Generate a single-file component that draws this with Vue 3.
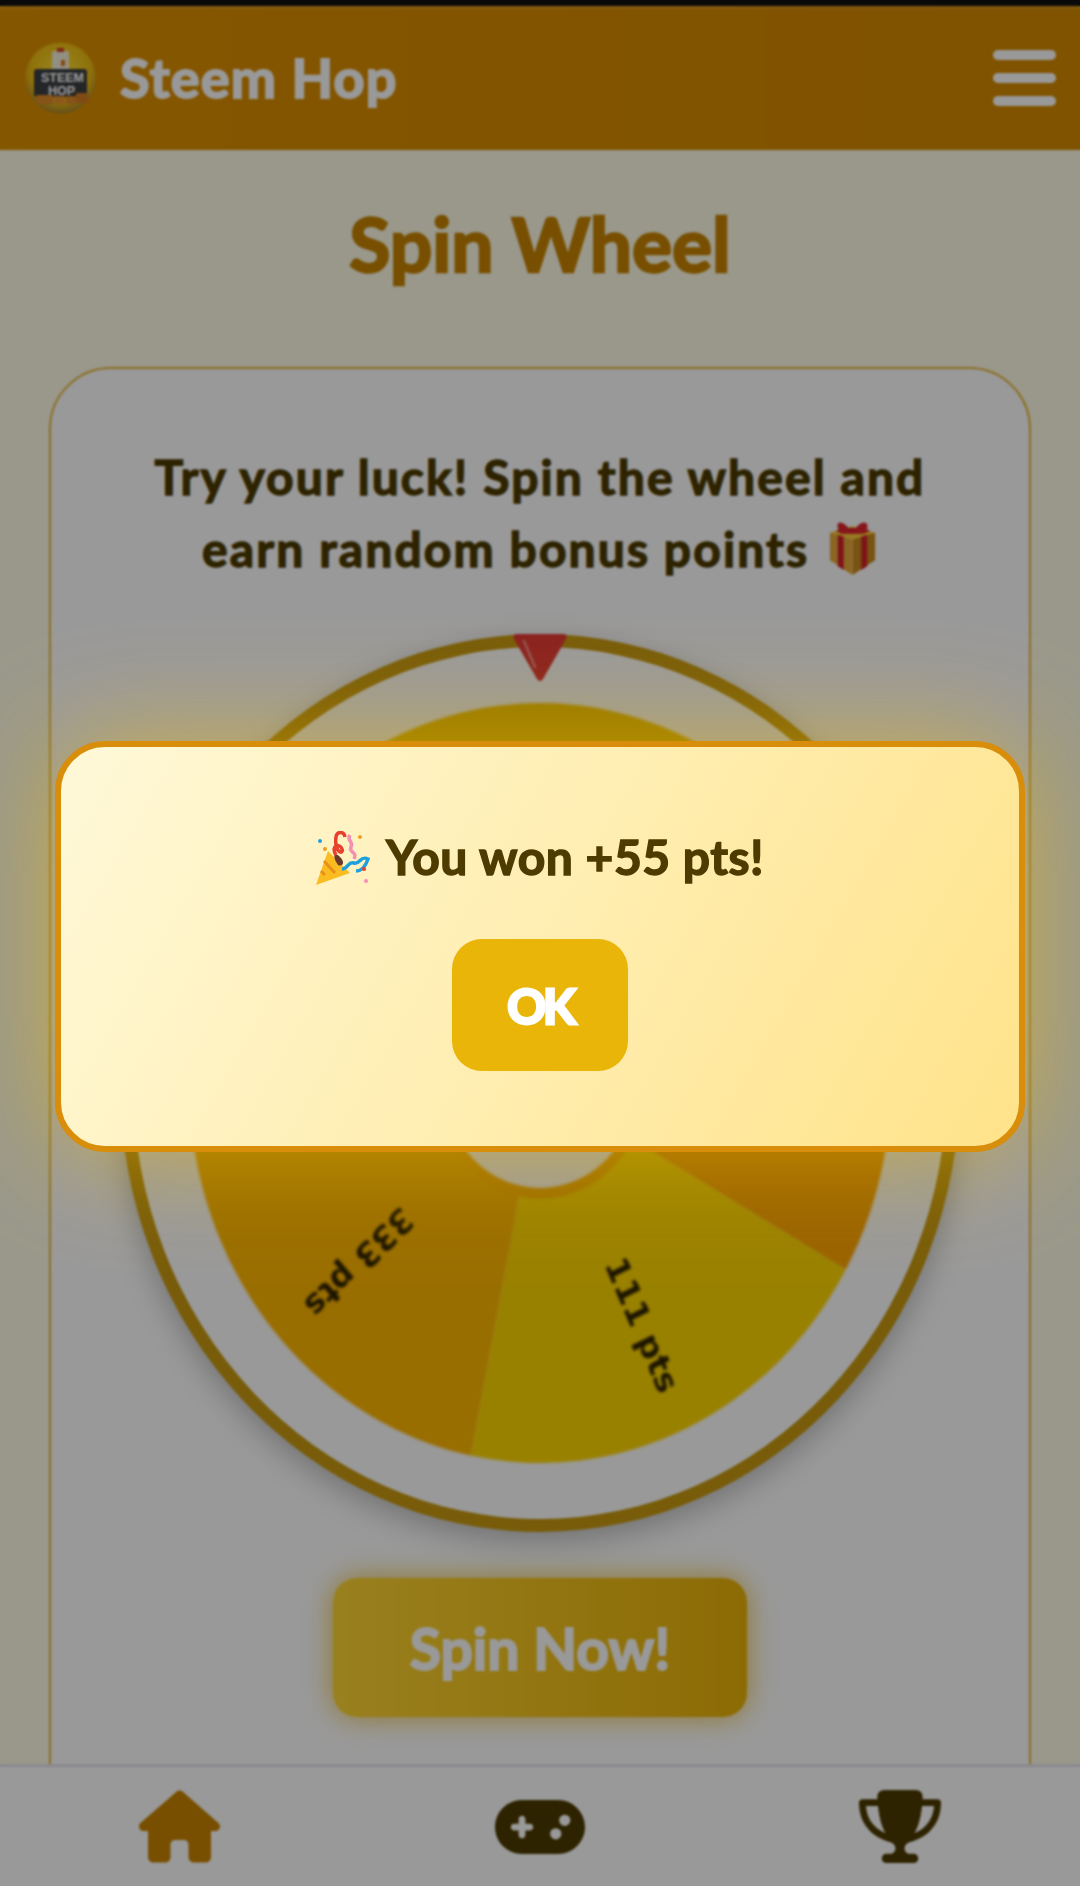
<template>
  <div class="app">
    <div class="status-bar"></div>
    <header class="top-bar">
      <div class="brand">
        <svg class="logo" viewBox="0 0 71 72">
          <defs>
            <radialGradient id="logoBg" cx="50%" cy="40%" r="60%">
              <stop offset="0%" stop-color="#ffe23a" />
              <stop offset="72%" stop-color="#eebb10" />
              <stop offset="100%" stop-color="#a8842e" />
            </radialGradient>
          </defs>
          <circle cx="35.5" cy="36" r="35.5" fill="url(#logoBg)" />
          <rect x="27" y="9" width="17" height="20" rx="2" fill="#f4efdc" />
          <rect x="32" y="6" width="7" height="4" fill="#d8402a" />
          <rect x="36" y="18" width="4" height="6" fill="#e07a20" />
          <rect x="9" y="27" width="53" height="28" rx="3" fill="#3b3f42" />
          <text x="37.5" y="40" class="logo-text" textLength="43" lengthAdjust="spacingAndGlyphs">STEEM</text>
          <text x="36.5" y="53" class="logo-text" textLength="27" lengthAdjust="spacingAndGlyphs">HOP</text>
          <rect x="11" y="53" width="17" height="9" rx="1" fill="#e08a28" />
          <rect x="29" y="54" width="11" height="8" rx="1" fill="#e8962c" />
          <rect x="41" y="54" width="10" height="8" rx="1" fill="#e08a28" />
          <rect x="51" y="51" width="12" height="10" rx="1" fill="#d87c22" />
        </svg>
        <span class="brand-name">Steem Hop</span>
      </div>
      <div class="menu-btn"><i></i><i></i><i></i></div>
    </header>

    <main class="content">
      <h1 class="page-title">Spin Wheel</h1>
      <section class="wheel-card">
        <p class="intro">
          Try your luck! Spin the wheel and<br />earn random bonus points
          <svg class="gift" viewBox="0 0 50 54">
            <path d="M25 16 48 11V39L25 54Z" fill="#c98a1e" />
            <path d="M25 16 2 11V39L25 54Z" fill="#e8a93a" />
            <path d="M2 11 25 4 48 11 25 18Z" fill="#ffc93c" />
            <path d="M10 13V45L16 49V15ZM40 13V45L34 49V15Z" fill="#d3222a" />
            <path d="M8 9 16 6 36 6 43 9 36 12 14 12Z" fill="#d3222a" />
            <path d="M24 10C16 -2 8 -2 10 6 11 11 18 12 24 10ZM26 10C32 -2 42 -2 40 6 39 11 32 12 26 10Z" fill="#e2262e" />
          </svg>
        </p>

        <div class="wheel-wrap">
          <svg class="pointer" viewBox="0 0 54 48">
            <path d="M4 0H50Q55 0 53 5L30 45Q27 49 24 45L1 5Q-1 0 4 0Z" fill="#e53935" />
            <path d="M11 7 22 33" stroke="#f58a84" stroke-width="2.5" stroke-linecap="round" />
          </svg>
          <div class="wheel-ring">
            <svg class="pie" viewBox="-100 -100 200 200" preserveAspectRatio="none">
              <path v-for="s in slices" :key="s.label" :d="s.path" :fill="s.color" />
              <text
                v-for="s in slices"
                :key="'t' + s.label"
                class="slice-label"
                :transform="s.labelTransform"
              >{{ s.label }}</text>
              <circle r="29" fill="#fff" stroke="#ffb300" stroke-width="2.8" />
            </svg>
          </div>
        </div>

        <button class="spin-btn">Spin Now!</button>
      </section>
    </main>

    <nav class="bottom-nav">
      <svg class="nav-icon home" viewBox="0 0 576 512" fill="#c88400">
        <path d="M575.8 255.5c0 18-15 32.1-32 32.1h-32l.7 160.2c0 2.7-.2 5.4-.5 8.1V472c0 22.1-17.9 40-40 40H456c-1.1 0-2.2 0-3.3-.1c-1.4 .1-2.8 .1-4.2 .1H416 392c-22.1 0-40-17.9-40-40V448 384c0-17.7-14.3-32-32-32H256c-17.7 0-32 14.3-32 32v64 24c0 22.1-17.9 40-40 40H160 128.1c-1.5 0-3-.1-4.5-.2c-1.2 .1-2.4 .2-3.6 .2H104c-22.1 0-40-17.9-40-40V360c0-.9 0-1.9 .1-2.8V287.6H32c-18 0-32-14-32-32.1c0-9 3-17 10-24L266.4 8c7-7 15-8 22-8s15 2 21 7L564.8 231.5c8 7 12 15 11 24z" />
      </svg>
      <svg class="nav-icon pad" viewBox="0 64 640 384" fill="#4d3b00">
        <path d="M192 64C86 64 0 150 0 256S86 448 192 448H448c106 0 192-86 192-192s-86-192-192-192H192zM496 168a40 40 0 1 1 0 80 40 40 0 1 1 0-80zM392 304a40 40 0 1 1 80 0 40 40 0 1 1 -80 0zM168 200c0-13.3 10.7-24 24-24s24 10.7 24 24v32h32c13.3 0 24 10.7 24 24s-10.7 24-24 24H216v32c0 13.3-10.7 24-24 24s-24-10.7-24-24V280H136c-13.3 0-24-10.7-24-24s10.7-24 24-24h32V200z" />
      </svg>
      <svg class="nav-icon cup" viewBox="0 0 576 512" fill="#4d3b00">
        <path d="M400 0H176c-26.5 0-48.1 21.8-47.1 48.2c.2 5.3 .4 10.6 .7 15.8H24C10.7 64 0 74.7 0 88c0 92.6 33.5 157 78.5 200.7c44.3 43.1 98.3 64.8 138.1 75.8c23.4 6.5 39.4 26 39.4 45.6c0 20.9-17 37.9-37.9 37.9H192c-17.7 0-32 14.3-32 32s14.3 32 32 32H384c17.7 0 32-14.3 32-32s-14.3-32-32-32H357.9C337 448 320 431 320 410.1c0-19.6 15.9-39.2 39.4-45.6c39.9-11 93.9-32.7 138.2-75.8C542.5 245 576 180.6 576 88c0-13.3-10.7-24-24-24H446.4c.3-5.2 .5-10.4 .7-15.8C448.1 21.8 426.5 0 400 0zM48.9 112h84.4c9.1 90.1 29.2 150.3 51.9 190.6c-24.9-11-50.8-26.5-73.2-48.3c-32-31.1-58-76-63-142.3zM464.1 254.3c-22.4 21.8-48.3 37.3-73.2 48.3c22.7-40.3 42.8-100.5 51.9-190.6h84.4c-5.1 66.3-31.1 111.2-63 142.3z" />
      </svg>
    </nav>

    <div class="overlay">
      <div class="prize-modal">
        <p class="prize-text">
          <svg class="popper" viewBox="0 0 54 54">
            <path d="M0 54 12 20 34 42Z" fill="#fbbc22" />
            <path d="M5 40 9 44M8 30 19 42" stroke="#e8901a" stroke-width="3" />
            <path d="M22 34C16 26 18 20 24 26 30 32 26 36 22 34Z" fill="#6b3a2a" />
            <path d="M20 24C14 14 24 12 26 18 28 24 18 22 20 6 21 0 28 0 29 6" fill="none" stroke="#e8402e" stroke-width="3.5" />
            <path d="M34 4C30 10 38 10 35 16 32 22 42 20 38 28" fill="none" stroke="#f490b4" stroke-width="3.5" />
            <path d="M26 38C32 38 32 30 38 32 44 34 44 24 52 28 50 34 46 40 40 40" fill="none" stroke="#1ea0dc" stroke-width="3.5" />
            <circle cx="4" cy="10" r="2" fill="#1ea0dc" />
            <circle cx="9" cy="18" r="2" fill="#f0a020" />
            <circle cx="48" cy="38" r="2" fill="#e8402e" />
            <circle cx="50" cy="50" r="2" fill="#f490b4" />
            <circle cx="44" cy="6" r="2" fill="#f0a020" />
          </svg>
          You won +55 pts!
        </p>
        <button class="ok-btn">OK</button>
      </div>
    </div>
  </div>
</template>

<script setup>
const values = [
  { label: "55 pts", color: "#f5c400" },
  { label: "222 pts", color: "#ffa500" },
  { label: "111 pts", color: "#ffd700" },
  { label: "333 pts", color: "#ffb700" },
  { label: "77 pts", color: "#f5c400" },
];

const offset = -24.6;
const polar = (deg, r) => {
  const rad = (deg * Math.PI) / 180;
  return `${(Math.sin(rad) * r).toFixed(2)} ${(-Math.cos(rad) * r).toFixed(2)}`;
};

const slices = values.map((v, i) => {
  const start = offset + i * 72;
  const mid = start + 36;
  return {
    ...v,
    path: `M0 0L${polar(start, 100)}A100 100 0 0 1 ${polar(start + 72, 100)}Z`,
    labelTransform: `rotate(${mid - 90}) translate(70 3.2)`,
  };
});
</script>

<style scoped>
.app {
  position: relative;
  width: 1080px;
  height: 1886px;
  overflow: hidden;
  display: flex;
  flex-direction: column;
  background: #fffde7;
  font-family: "Lato", "Noto Sans", sans-serif;
  font-weight: 700;
}
.status-bar {
  height: 6px;
  background: #111;
}
.top-bar {
  height: 144px;
  flex: none;
  display: flex;
  align-items: center;
  justify-content: space-between;
  padding: 0 24px 0 25px;
  box-sizing: border-box;
  background: linear-gradient(90deg, #de9000, #d58a00);
  box-shadow: inset 0 3px 0 rgba(255, 255, 255, 0.1);
}
.brand {
  display: flex;
  align-items: center;
  gap: 24px;
}
.logo {
  width: 71px;
  height: 72px;
  display: block;
}
.logo-text {
  font-family: "Liberation Sans", sans-serif;
  font-size: 12px;
  font-weight: 700;
  fill: #fff;
  text-anchor: middle;
}
.brand-name {
  color: #fff;
  font-size: 54px;
  line-height: 1;
  letter-spacing: 1.2px;
  -webkit-text-stroke: 2px #fff;
}
.menu-btn {
  display: flex;
  flex-direction: column;
  gap: 13px;
}
.menu-btn i {
  display: block;
  width: 63px;
  height: 10px;
  border-radius: 5px;
  background: #fff;
}
.content {
  flex: 1;
  min-height: 0;
  overflow: hidden;
  padding: 0 49px;
}
.page-title {
  margin: 49px 0 80px;
  text-align: center;
  font-size: 75px;
  line-height: 88px;
  font-weight: 700;
  color: #c88400;
  -webkit-text-stroke: 2.5px #c88400;
}
.wheel-card {
  display: flex;
  flex-direction: column;
  align-items: center;
  height: 1500px;
  padding: 72px 0 0;
  border: 2px solid #e8b93a;
  border-radius: 62px;
  background: #fff;
  box-sizing: border-box;
}
.intro {
  margin: 0;
  text-align: center;
  font-size: 48px;
  line-height: 72px;
  letter-spacing: 2.1px;
  color: #4d3b00;
  -webkit-text-stroke: 1.4px #4d3b00;
  white-space: nowrap;
}
.gift {
  width: 51px;
  height: 53px;
  vertical-align: -8px;
  margin-left: 4px;
}
.wheel-wrap {
  position: relative;
  margin-top: 49px;
}
.pointer {
  position: absolute;
  top: 0;
  left: 393px;
  width: 54px;
  height: 48px;
  z-index: 2;
}
.wheel-ring {
  width: 840px;
  height: 898px;
  border: 13px solid #c89a10;
  border-radius: 50%;
  box-sizing: border-box;
  display: flex;
  align-items: center;
  justify-content: center;
  background: #fff;
  box-shadow: 0 10px 30px rgba(0, 0, 0, 0.25);
}
.pie {
  width: 702px;
  height: 760px;
  filter: blur(0.8px);
}
.slice-label {
  font-family: "DejaVu Sans", sans-serif;
  font-size: 9px;
  font-weight: 700;
  fill: #2e2200;
  text-anchor: middle;
}
.spin-btn {
  margin-top: 46px;
  width: 414px;
  height: 139px;
  flex: none;
  border: 0;
  border-radius: 24px;
  background: linear-gradient(90deg, #ffd633, #eab308);
  box-shadow: 0 0 28px rgba(234, 179, 8, 0.75);
  color: #fff;
  font-family: inherit;
  font-size: 57px;
  font-weight: 700;
  -webkit-text-stroke: 2px #fff;
}
.bottom-nav {
  position: relative;
  height: 122px;
  flex: none;
  box-sizing: border-box;
  border-top: 3px solid #e6e6f0;
  background: #fff;
  display: grid;
  grid-template-columns: repeat(3, 1fr);
  justify-items: center;
  align-items: center;
}
.nav-icon {
  display: block;
}
.home {
  width: 81px;
  height: 73px;
  transform: translateX(-1px);
}
.pad {
  width: 90px;
  height: 54px;
}
.cup {
  width: 82px;
  height: 73px;
}
.overlay {
  position: absolute;
  inset: 0;
  z-index: 10;
  display: flex;
  align-items: center;
  justify-content: center;
  padding-top: 7px;
  box-sizing: border-box;
  background: rgba(0, 0, 0, 0.4);
  backdrop-filter: blur(1px);
}
.prize-modal {
  width: 970px;
  height: 411px;
  box-sizing: border-box;
  display: flex;
  flex-direction: column;
  align-items: center;
  border: 6px solid #d98e0b;
  border-radius: 50px;
  background: linear-gradient(120deg, #fff9d9, #ffe38a);
  box-shadow: 0 0 110px rgba(255, 200, 0, 0.5);
}
.prize-text {
  margin: 78px 0 0;
  font-size: 48px;
  line-height: 64px;
  letter-spacing: 0.5px;
  color: #4d3b00;
  -webkit-text-stroke: 1.4px #4d3b00;
  white-space: nowrap;
}
.popper {
  width: 54px;
  height: 54px;
  vertical-align: -10px;
  margin-right: 6px;
}
.ok-btn {
  margin-top: 50px;
  width: 176px;
  height: 132px;
  border: 0;
  border-radius: 30px;
  background: #e9b508;
  color: #fff;
  font-family: inherit;
  font-size: 48px;
  font-weight: 700;
  letter-spacing: -3px;
  -webkit-text-stroke: 3px #fff;
}
</style>

<style>
html,
body {
  margin: 0;
  background: #fffde7;
}
</style>
